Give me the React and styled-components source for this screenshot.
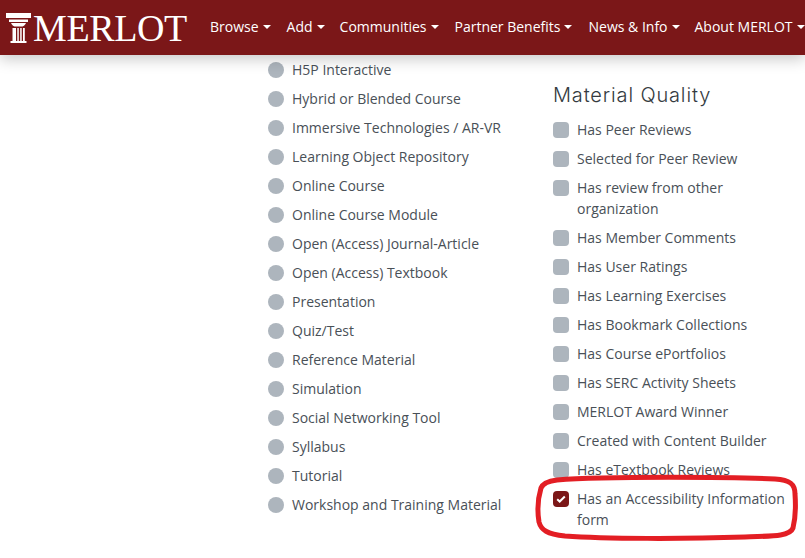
import React from "react";
import styled, { createGlobalStyle } from "styled-components";

const GlobalStyle = createGlobalStyle`
  html, body {
    margin: 0;
    height: 100%;
    overflow: hidden;
    background: #fff;
    font-family: "Open Sans", "Liberation Sans", sans-serif;
  }
`;

const Page = styled.div`
  position: relative;
  width: 805px;
  height: 558px;
  overflow: hidden;
`;

const Navbar = styled.header`
  position: relative;
  z-index: 1;
  height: 55px;
  display: flex;
  align-items: center;
  background: #7b1718;
  box-shadow: 0 4px 14px rgba(0, 0, 0, 0.22);
`;

const Logo = styled.div`
  display: flex;
  align-items: center;
  width: 210px;
  padding-left: 6px;
  box-sizing: border-box;
  color: #fff;
`;

const LogoText = styled.span`
  font-family: "Liberation Serif", serif;
  font-size: 38px;
  line-height: 1;
  letter-spacing: -0.4px;
  margin-left: 2px;
  padding-top: 1px;
`;

const NavItem = styled.span`
  display: flex;
  align-items: center;
  color: #fff;
  font-size: 14px;
  margin-right: ${(p) => p.$gap}px;
  margin-bottom: 2px;
  white-space: nowrap;

  &::after {
    content: "";
    margin-left: 4px;
    margin-top: 1px;
    border-top: 4px solid #fff;
    border-left: 4px solid transparent;
    border-right: 4px solid transparent;
  }
`;

const Content = styled.main`
  display: flex;
  padding: 4px 0 0 268px;
`;

const TypeColumn = styled.ul`
  width: 285px;
  margin: 0;
  padding: 0;
  list-style: none;
`;

const QualityColumn = styled.section`
  width: 240px;
  padding-top: 21px;
`;

const Heading = styled.h5`
  margin: 0 0 9px;
  color: #343a40;
  font-family: "Inter", sans-serif;
  font-size: 20px;
  font-weight: 300;
  line-height: 30px;
  letter-spacing: 0.85px;
`;

const Options = styled.ul`
  margin: 0;
  padding: 0;
  list-style: none;
`;

const Option = styled.li`
  display: flex;
  align-items: flex-start;
  gap: 8px;
  margin-bottom: 8px;
  color: #495057;
  font-size: 14px;
  line-height: 21px;
`;

const Radio = styled.span`
  flex: none;
  width: 16px;
  height: 16px;
  margin-top: 3px;
  border-radius: 50%;
  background: #adb5bd;
`;

const Checkbox = styled.span`
  flex: none;
  display: flex;
  align-items: center;
  justify-content: center;
  width: 16px;
  height: 16px;
  margin-top: 3px;
  border-radius: 4px;
  background: ${(p) => (p.$checked ? "#7b1718" : "#adb5bd")};
`;

const Highlight = styled.svg`
  position: absolute;
  left: 535px;
  top: 474px;
  width: 264px;
  height: 68px;
  pointer-events: none;
`;

const types = [
  "H5P Interactive",
  "Hybrid or Blended Course",
  "Immersive Technologies / AR-VR",
  "Learning Object Repository",
  "Online Course",
  "Online Course Module",
  "Open (Access) Journal-Article",
  "Open (Access) Textbook",
  "Presentation",
  "Quiz/Test",
  "Reference Material",
  "Simulation",
  "Social Networking Tool",
  "Syllabus",
  "Tutorial",
  "Workshop and Training Material",
];

const quality = [
  "Has Peer Reviews",
  "Selected for Peer Review",
  "Has review from other organization",
  "Has Member Comments",
  "Has User Ratings",
  "Has Learning Exercises",
  "Has Bookmark Collections",
  "Has Course ePortfolios",
  "Has SERC Activity Sheets",
  "MERLOT Award Winner",
  "Created with Content Builder",
  "Has eTextbook Reviews",
  "Has an Accessibility Information form",
];

const nav = [
  ["Browse", 16],
  ["Add", 15],
  ["Communities", 16],
  ["Partner Benefits", 16],
  ["News & Info", 15],
  ["About MERLOT", 0],
];

const ColumnMark = () => (
  <svg width="25" height="30" viewBox="0 0 25 30" fill="#fff">
    <path d="M0 0h25v5H0z" />
    <path d="M3 6.500h19v2.500H3z" />
    <path d="M5 10h15c-.8 2-2 3-3.500 3.500h-8C7 13 5.800 12 5 10z" />
    <path d="M6.500 15h3.500V28H6.500zM11.300 15h1.500V28h-1.500zM14.200 15h1.500V28h-1.500zM17 15h1.800V28H17z" />
    <path d="M4.500 28h16v2h-16z" />
  </svg>
);

const App = () => (
  <Page>
    <GlobalStyle />
    <Navbar>
      <Logo>
        <ColumnMark />
        <LogoText>MERLOT</LogoText>
      </Logo>
      {nav.map(([label, gap]) => (
        <NavItem key={label} $gap={gap}>
          {label}
        </NavItem>
      ))}
    </Navbar>
    <Content>
      <TypeColumn>
        {types.map((t) => (
          <Option key={t}>
            <Radio />
            {t}
          </Option>
        ))}
      </TypeColumn>
      <QualityColumn>
        <Heading>Material Quality</Heading>
        <Options>
          {quality.map((q, i) => {
            const checked = i === quality.length - 1;
            return (
              <Option key={q}>
                <Checkbox $checked={checked}>
                  {checked && (
                    <svg width="10" height="8" viewBox="0 0 10 8" fill="none">
                      <path d="M1.200 4.200 3.700 6.500 8.800 1.500" stroke="#fff" strokeWidth="2" />
                    </svg>
                  )}
                </Checkbox>
                <span>{q}</span>
              </Option>
            );
          })}
        </Options>
      </QualityColumn>
    </Content>
    <Highlight viewBox="0 0 264 68" fill="none">
      <path
        d="M22 6C70 2 200 3 240 5C255 6 260 10 260 20C261 34 260 46 258 54C255 62 240 62 210 63C150 65 70 65 30 62C12 60 6 56 4 48C2 36 3 24 6 14C8 9 14 7 22 6Z"
        stroke="#e31e24"
        strokeWidth="5"
      />
    </Highlight>
  </Page>
);

export default App;
